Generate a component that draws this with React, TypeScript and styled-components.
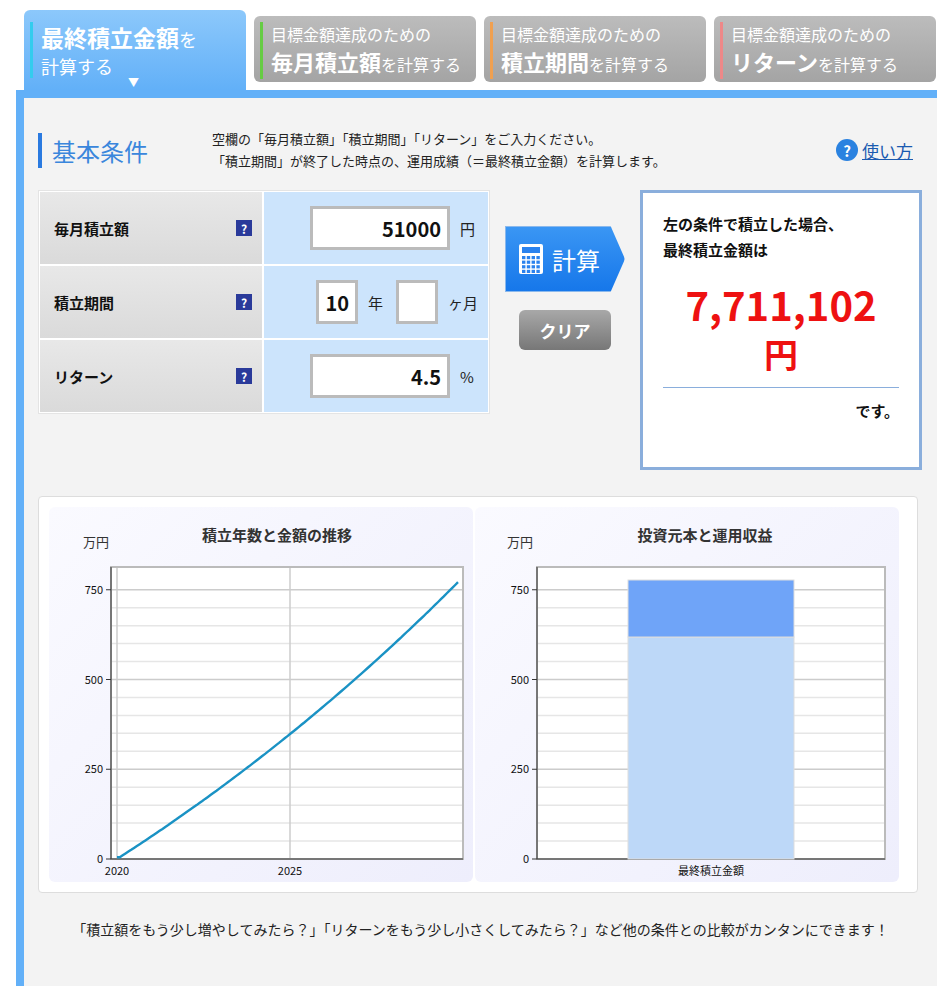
import React from "react";
import styled, { createGlobalStyle } from "styled-components";

const Global = createGlobalStyle`
  body { margin: 0; background: #fff; font-family: "Noto Sans CJK JP", "Noto Sans", sans-serif; }
`;

const tabs = [
  { color: "#66cc44", big: "毎月積立額" },
  { color: "#f0a050", big: "積立期間" },
  { color: "#ee8888", big: "リターン" },
];

const App = () => {
  // 成長曲線（0年〜10年）
  const pts: string[] = [];
  for (let m = 0; m <= 120; m++) {
    const r = 0.045 / 12;
    const v = m === 0 ? 5.1 : (51000 * ((Math.pow(1 + r, m) - 1) / r)) / 10000;
    const x = 68 + (m / 120) * 341;
    const y = 352 - v * 0.359;
    pts.push(`${x.toFixed(1)},${y.toFixed(1)}`);
  }

  return (
    <Page>
      <Global />
      <TabBar>
        <ActiveTab>
          <TabInner $color="#33ccee">
            <ActiveBig>最終積立金額<small>を</small></ActiveBig>
            <ActiveSmall>計算する</ActiveSmall>
          </TabInner>
          <Arrow>▼</Arrow>
        </ActiveTab>
        {tabs.map((t) => (
          <Tab key={t.big}>
            <TabInner $color={t.color}>
              <TabSmall>目標金額達成のための</TabSmall>
              <TabBig>
                {t.big}
                <small>を計算する</small>
              </TabBig>
            </TabInner>
          </Tab>
        ))}
      </TabBar>
      <Panel>
        <Head>
          <HeadTitle>基本条件</HeadTitle>
          <HeadText>
            空欄の「毎月積立額」「積立期間」「リターン」をご入力ください。
            <br />
            「積立期間」が終了した時点の、運用成績（＝最終積立金額）を計算します。
          </HeadText>
          <Help>
            <HelpIcon>?</HelpIcon>
            <HelpLink>使い方</HelpLink>
          </Help>
        </Head>
        <Top>
          <Table>
            <Row>
              <Label>
                毎月積立額<Q>?</Q>
              </Label>
              <Cell>
                <Input $w={140}>51000</Input>
                <Unit>円</Unit>
              </Cell>
            </Row>
            <Row>
              <Label>
                積立期間<Q>?</Q>
              </Label>
              <Cell>
                <Input $w={42}>10</Input>
                <Unit>年</Unit>
                <Input $w={42} />
                <Unit>ヶ月</Unit>
              </Cell>
            </Row>
            <Row>
              <Label>
                リターン<Q>?</Q>
              </Label>
              <Cell>
                <Input $w={140}>4.5</Input>
                <Unit>%</Unit>
              </Cell>
            </Row>
          </Table>
          <Buttons>
            <CalcButton>
              <svg width="26" height="32" viewBox="0 0 26 32">
                <rect x="1" y="1" width="24" height="30" rx="2" fill="#fff" />
                <rect x="4" y="4" width="18" height="6" fill="#2a82ee" />
                {[0, 1, 2, 3].map((r) =>
                  [0, 1, 2, 3].map((c) => (
                    <rect key={`${r}${c}`} x={4 + c * 4.8} y={13 + r * 4.6} width="3.4" height="3.2" fill="#2a82ee" />
                  ))
                )}
              </svg>
              計算
            </CalcButton>
            <ClearButton>クリア</ClearButton>
          </Buttons>
          <Result>
            <ResultLead>
              左の条件で積立した場合、
              <br />
              最終積立金額は
            </ResultLead>
            <Amount>7,711,102</Amount>
            <Yen>円</Yen>
            <Desu>です。</Desu>
          </Result>
        </Top>
        <Charts>
          <Chart>
            <svg width="424" height="375">
              <text x="34" y="40" fontSize="13" fill="#333">万円</text>
              <text x="228" y="34" fontSize="15" fontWeight="700" fill="#333" textAnchor="middle">積立年数と金額の推移</text>
              <rect x="62" y="60" width="352" height="292" fill="#fff" />
              {Array.from({ length: 16 }).map((_, i) => (
                <line key={i} x1="62" x2="414" y1={352 - i * 17.95} y2={352 - i * 17.95} stroke={i % 5 === 0 ? "#ccc" : "#e6e6e6"} strokeWidth="1.5" />
              ))}
              <line x1="68" x2="68" y1="60" y2="352" stroke="#ccc" strokeWidth="1.5" />
              <line x1="241" x2="241" y1="60" y2="352" stroke="#ccc" strokeWidth="1.5" />
              <rect x="62" y="60" width="352" height="292" fill="none" stroke="#bbb" strokeWidth="2" />
              <line x1="62" x2="62" y1="60" y2="352" stroke="#333" />
              <line x1="62" x2="414" y1="352" y2="352" stroke="#333" />
              <polyline points={pts.join(" ")} fill="none" stroke="#1a92c4" strokeWidth="2.4" />
              {[0, 250, 500, 750].map((v) => (
                <g key={v}>
                  <line x1="57" x2="62" y1={352 - v * 0.359} y2={352 - v * 0.359} stroke="#333" />
                  <text x="54" y={356 - v * 0.359} fontSize="11" textAnchor="end" fill="#111">{v}</text>
                </g>
              ))}
              <text x="68" y="368" fontSize="11" textAnchor="middle" fill="#111">2020</text>
              <text x="241" y="368" fontSize="11" textAnchor="middle" fill="#111">2025</text>
            </svg>
          </Chart>
          <Chart>
            <svg width="424" height="375">
              <text x="32" y="40" fontSize="13" fill="#333">万円</text>
              <text x="230" y="34" fontSize="15" fontWeight="700" fill="#333" textAnchor="middle">投資元本と運用収益</text>
              <rect x="62" y="60" width="348" height="292" fill="#fff" />
              {Array.from({ length: 16 }).map((_, i) => (
                <line key={i} x1="62" x2="410" y1={352 - i * 17.95} y2={352 - i * 17.95} stroke={i % 5 === 0 ? "#ccc" : "#e6e6e6"} strokeWidth="1.5" />
              ))}
              <rect x="62" y="60" width="348" height="292" fill="none" stroke="#bbb" strokeWidth="2" />
              <line x1="62" x2="62" y1="60" y2="352" stroke="#333" />
              <line x1="62" x2="410" y1="352" y2="352" stroke="#333" />
              <rect x="153" y="130" width="166" height="222" fill="#bdd8f8" stroke="#ddd" />
              <rect x="153" y="73" width="166" height="57" fill="#6fa4f8" stroke="#ddd" />
              {[0, 250, 500, 750].map((v) => (
                <g key={v}>
                  <line x1="57" x2="62" y1={352 - v * 0.359} y2={352 - v * 0.359} stroke="#333" />
                  <text x="54" y={356 - v * 0.359} fontSize="11" textAnchor="end" fill="#111">{v}</text>
                </g>
              ))}
              <text x="236" y="368" fontSize="11" textAnchor="middle" fill="#111">最終積立金額</text>
            </svg>
          </Chart>
        </Charts>
        <Footer>
          「積立額をもう少し増やしてみたら？」「リターンをもう少し小さくしてみたら？」など他の条件との比較がカンタンにできます！
        </Footer>
      </Panel>
    </Page>
  );
};

export default App;

const Page = styled.div`
  width: 937px;
  padding-top: 10px;
`;

const TabBar = styled.div`
  display: flex;
  align-items: flex-end;
  gap: 8px;
  padding-left: 24px;
`;

const ActiveTab = styled.div`
  width: 222px;
  height: 80px;
  background: linear-gradient(#8cc8fb, #62b0f8);
  border-radius: 6px 6px 0 0;
  padding: 12px 0 0 6px;
  box-sizing: border-box;
  position: relative;
`;

const Arrow = styled.span`
  position: absolute;
  left: 104px;
  bottom: 0;
  color: #fff;
  font-size: 11px;
`;

const Tab = styled.div`
  width: 222px;
  height: 66px;
  margin-bottom: 8px;
  background: linear-gradient(#bcbcbc, #a4a4a4);
  border-radius: 6px;
  padding: 6px 0 0 6px;
  box-sizing: border-box;
`;

const TabInner = styled.div<{ $color: string }>`
  border-left: 3px solid ${(p) => p.$color};
  padding-left: 8px;
  color: #fff;
  line-height: 1.3;
`;

const ActiveBig = styled.div`
  font-size: 23px;
  font-weight: 700;
  line-height: 30px;
  small { font-size: 18px; font-weight: 400; }
`;

const ActiveSmall = styled.div`
  font-size: 18px;
  line-height: 24px;
`;

const TabSmall = styled.div`
  font-size: 16px;
  line-height: 24px;
`;

const TabBig = styled.div`
  font-size: 22px;
  font-weight: 700;
  line-height: 30px;
  small { font-size: 16px; font-weight: 400; }
`;

const Panel = styled.div`
  margin-left: 16px;
  border: 8px solid #62b0f8;
  border-right: none;
  border-bottom: none;
  background: #f3f3f3;
  padding: 30px 14px 10px 14px;
  height: 896px;
  box-sizing: border-box;
`;

const Head = styled.div`
  display: flex;
  align-items: center;
  margin-bottom: 18px;
`;

const HeadTitle = styled.h2`
  margin: 0;
  border-left: 4px solid #2a7ae0;
  padding-left: 10px;
  color: #3a86dc;
  font-size: 24px;
  font-weight: 400;
  width: 150px;
`;

const HeadText = styled.p`
  margin: 0 0 0 10px;
  font-size: 13px;
  line-height: 22px;
  color: #222;
  flex: 1;
`;

const Help = styled.div`
  display: flex;
  align-items: center;
  gap: 4px;
  margin-right: 10px;
`;

const HelpIcon = styled.span`
  width: 22px;
  height: 22px;
  border-radius: 50%;
  background: #2a82e0;
  color: #fff;
  font-weight: 700;
  font-size: 15px;
  display: flex;
  align-items: center;
  justify-content: center;
`;

const HelpLink = styled.span`
  color: #1a5ab0;
  text-decoration: underline;
  font-size: 17px;
`;

const Top = styled.div`
  display: flex;
  align-items: flex-start;
  height: 318px;
`;

const Table = styled.div`
  width: 448px;
  background: #fff;
  border: 1px solid #e4e4e4;
  display: flex;
  flex-direction: column;
  gap: 2px;
  padding: 1px;
`;

const Row = styled.div`
  display: flex;
  height: 72px;
  gap: 2px;
`;

const Label = styled.div`
  width: 222px;
  background: linear-gradient(#e8e8e8, #dadada);
  display: flex;
  align-items: center;
  justify-content: space-between;
  padding: 0 10px 0 14px;
  box-sizing: border-box;
  font-weight: 700;
  font-size: 15px;
  color: #111;
`;

const Q = styled.span`
  width: 16px;
  height: 16px;
  background: #2a3a9a;
  color: #fff;
  font-size: 12px;
  display: flex;
  align-items: center;
  justify-content: center;
`;

const Cell = styled.div`
  flex: 1;
  background: #cce4fc;
  display: flex;
  align-items: center;
  justify-content: flex-end;
  padding-right: 10px;
  gap: 10px;
`;

const Input = styled.div<{ $w: number }>`
  width: ${(p) => p.$w}px;
  height: 44px;
  box-sizing: border-box;
  background: #fff;
  border: 3px solid #bbb;
  display: flex;
  align-items: center;
  justify-content: flex-end;
  padding-right: 6px;
  font-size: 20px;
  font-weight: 700;
  color: #111;
`;

const Unit = styled.span`
  font-size: 15px;
  color: #222;
  min-width: 18px;
`;

const Buttons = styled.div`
  width: 150px;
  display: flex;
  flex-direction: column;
  align-items: center;
  padding-top: 36px;
  gap: 18px;
`;

const CalcButton = styled.div`
  width: 120px;
  height: 66px;
  box-sizing: border-box;
  background: linear-gradient(#3a96f4, #1677ea);
  border: 1px solid #8ab8ec;
  clip-path: polygon(0 0, 88% 0, 100% 50%, 88% 100%, 0 100%);
  color: #fff;
  font-size: 24px;
  display: flex;
  align-items: center;
  gap: 8px;
  padding-left: 12px;
`;

const ClearButton = styled.div`
  width: 92px;
  height: 40px;
  border-radius: 6px;
  background: linear-gradient(#a8a8a8, #777);
  color: #fff;
  font-size: 17px;
  font-weight: 700;
  display: flex;
  align-items: center;
  justify-content: center;
`;

const Result = styled.div`
  width: 282px;
  height: 280px;
  box-sizing: border-box;
  background: #fff;
  border: 3px solid #8aaedc;
  padding: 18px 20px 0;
  display: flex;
  flex-direction: column;
`;

const ResultLead = styled.p`
  margin: 0;
  font-size: 15px;
  font-weight: 700;
  line-height: 26px;
  color: #111;
`;

const Amount = styled.div`
  text-align: center;
  color: #ee1111;
  font-size: 40px;
  font-weight: 700;
  margin-top: 16px;
  line-height: 50px;
`;

const Yen = styled.div`
  text-align: center;
  color: #ee1111;
  font-size: 34px;
  font-weight: 700;
  line-height: 50px;
  border-bottom: 1px solid #8aaedc;
  padding-bottom: 8px;
`;

const Desu = styled.div`
  text-align: right;
  font-size: 15px;
  font-weight: 700;
  margin-top: 12px;
  color: #111;
`;

const Charts = styled.div`
  width: 880px;
  height: 397px;
  box-sizing: border-box;
  background: #fff;
  border: 1px solid #ddd;
  border-radius: 4px;
  display: flex;
  gap: 2px;
  padding: 10px 10px;
  margin-top: -12px;
`;

const Chart = styled.div`
  width: 424px;
  background: linear-gradient(135deg, #fafaff, #eeeefc);
  border-radius: 6px;
`;

const Footer = styled.p`
  margin: 24px 0 0;
  font-size: 14px;
  line-height: 24px;
  text-align: center;
  color: #222;
  padding: 0 10px;
`;
